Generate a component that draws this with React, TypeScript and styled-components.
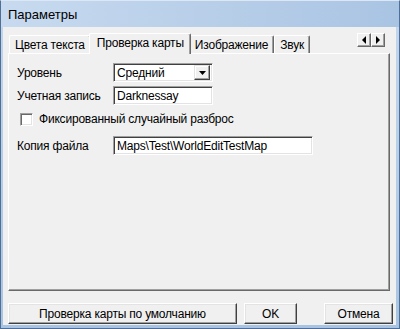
import styled, { createGlobalStyle } from 'styled-components';

const Global = createGlobalStyle`
    html, body { margin: 0; padding: 0; background: #bcd2ea; }
    * { box-sizing: border-box; }
`

const Window = styled.div`
    width: 400px;
    height: 329px;
    display: flex;
    flex-direction: column;
    background: linear-gradient(180deg, #c3d7ed 0%, #a9c4e2 100%);
    border: 1px solid #4f6f96;
    border-top-color: #dbe7f4;
    font-family: 'Liberation Sans', Arial, sans-serif;
    color: #000;
`

const TitleBar = styled.div`
    height: 26px;
    display: flex;
    align-items: center;
    padding-left: 7px;
    font-size: 13px;
    background: linear-gradient(90deg, #c7daef 0%, #b6cde8 60%, #a9c4e3 100%);
`

const Client = styled.div`
    flex: 1;
    margin: 0 3px 3px 2px;
    background: #f0f0f0;
    display: flex;
    flex-direction: column;
    padding: 5px 0 0 5px;
    font-size: 12px;
    letter-spacing: -0.2px;
`

const TabStrip = styled.div`
    height: 21px;
    display: flex;
    align-items: flex-end;
    padding-left: 1px;
    position: relative;
    z-index: 1;
`

const Tab = styled.div<{ $active?: boolean }>`
    height: ${p => p.$active ? '21px' : '18px'};
    margin: ${p => p.$active ? '0 -2px -1px -2px' : '0'};
    padding: ${p => p.$active ? '0 6px 0 7px' : '0 5px'};
    display: flex;
    align-items: center;
    padding-bottom: ${p => p.$active ? '2px' : '0'};
    background: #f0f0f0;
    border: 1px solid #fff;
    border-bottom: none;
    border-right: 1px solid #696969;
    box-shadow: inset -1px 0 0 #a0a0a0;
    border-radius: 2px 2px 0 0;
    position: relative;
    z-index: ${p => p.$active ? 2 : 1};
`

const ScrollPair = styled.div`
    position: absolute;
    right: 11px;
    top: 1px;
    display: flex;
`

const ScrollBtn = styled.div`
    width: 14px;
    height: 14px;
    background: #f0f0f0;
    border: 1px solid;
    border-color: #fff #696969 #696969 #fff;
    box-shadow: inset -1px -1px 0 #a0a0a0;
    display: flex;
    align-items: center;
    justify-content: center;
`

const Panel = styled.div`
    width: 382px;
    height: 238px;
    border: 1px solid;
    border-color: #fff #696969 #696969 #fff;
    box-shadow: inset -1px -1px 0 #a0a0a0;
    padding: 9px 0 0 8px;
    display: flex;
    flex-direction: column;
`

const Row = styled.div<{ $mt?: number }>`
    display: flex;
    align-items: center;
    margin-top: ${p => p.$mt ?? 0}px;
`

const Label = styled.div`
    width: 96px;
`

const Sunken = styled.div<{ $w: number }>`
    width: ${p => p.$w}px;
    height: 19px;
    background: #fff;
    border: 1px solid;
    border-color: #a0a0a0 #fff #fff #a0a0a0;
    box-shadow: inset 1px 1px 0 #404040, inset -1px -1px 0 #e3e3e3;
    display: flex;
    align-items: center;
    padding-left: 3px;
    white-space: nowrap;
`

const Select = styled(Sunken)`
    justify-content: space-between;
    padding-right: 2px;
`

const DropBtn = styled.div`
    width: 16px;
    height: 15px;
    background: #f0f0f0;
    border: 1px solid;
    border-color: #e3e3e3 #404040 #404040 #e3e3e3;
    box-shadow: inset -1px -1px 0 #a0a0a0, inset 1px 1px 0 #fff;
    display: flex;
    align-items: center;
    justify-content: center;
`

const Check = styled.div`
    width: 13px;
    height: 13px;
    margin: 0 6px 0 3px;
    background: #fff;
    border: 1px solid;
    border-color: #a0a0a0 #fff #fff #a0a0a0;
    box-shadow: inset 1px 1px 0 #696969, inset -1px -1px 0 #e3e3e3;
`

const Footer = styled.div`
    display: flex;
    margin-top: 12px;
`

const Button = styled.div<{ $w: number; $ml?: number }>`
    width: ${p => p.$w}px;
    height: 21px;
    margin-left: ${p => p.$ml ?? 0}px;
    background: #f0f0f0;
    border: 1px solid;
    border-color: #fff #404040 #404040 #fff;
    box-shadow: inset -1px -1px 0 #a0a0a0, inset 1px 1px 0 #e3e3e3;
    display: flex;
    align-items: center;
    justify-content: center;
`

const Arrow = ({ dir }: { dir: 'left' | 'right' | 'down' }) => {
    const pts = dir === 'left' ? '4,0 4,8 0,4' : dir === 'right' ? '0,0 0,8 4,4' : '0,0 7,0 3.5,4'
    const w = dir === 'down' ? 7 : 4
    const h = dir === 'down' ? 4 : 8
    return (
        <svg width={w} height={h} viewBox={`0 0 ${w} ${h}`}>
            <polygon points={pts} fill="#000" />
        </svg>
    )
}

export default function App() {
    return (
        <>
            <Global />
            <Window>
                <TitleBar>Параметры</TitleBar>
                <Client>
                    <TabStrip>
                        <Tab>Цвета текста</Tab>
                        <Tab $active>Проверка карты</Tab>
                        <Tab>Изображение</Tab>
                        <Tab>Звук</Tab>
                        <ScrollPair>
                            <ScrollBtn><Arrow dir="left" /></ScrollBtn>
                            <ScrollBtn><Arrow dir="right" /></ScrollBtn>
                        </ScrollPair>
                    </TabStrip>
                    <Panel>
                        <Row>
                            <Label>Уровень</Label>
                            <Select $w={100}>
                                Средний
                                <DropBtn><Arrow dir="down" /></DropBtn>
                            </Select>
                        </Row>
                        <Row $mt={4}>
                            <Label>Учетная запись</Label>
                            <Sunken $w={100}>Darknessay</Sunken>
                        </Row>
                        <Row $mt={7}>
                            <Check />
                            Фиксированный случайный разброс
                        </Row>
                        <Row $mt={10}>
                            <Label>Копия файла</Label>
                            <Sunken $w={200}>Maps\Test\WorldEditTestMap</Sunken>
                        </Row>
                    </Panel>
                    <Footer>
                        <Button $w={229}>Проверка карты по умолчанию</Button>
                        <Button $w={53} $ml={7}>OK</Button>
                        <Button $w={69} $ml={27}>Отмена</Button>
                    </Footer>
                </Client>
            </Window>
        </>
    )
}
